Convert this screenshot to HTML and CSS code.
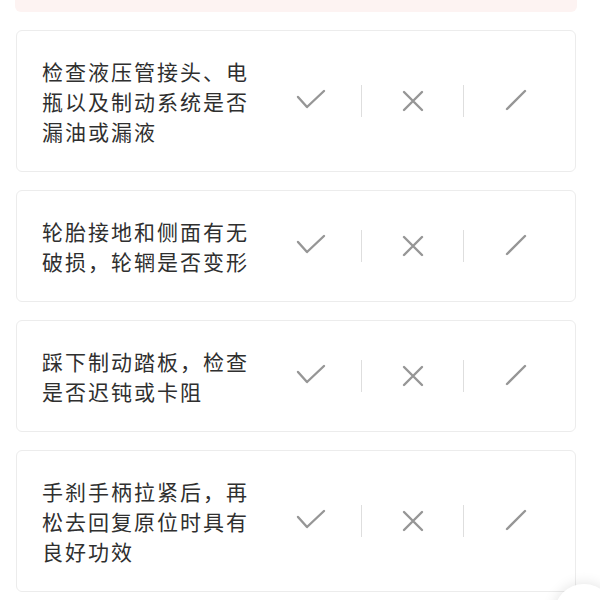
FILE: index.html
```html
<!DOCTYPE html>
<html lang="zh-CN">
<head>
    <meta charset="UTF-8">
    <meta name="viewport" content="width=device-width, initial-scale=1.0">
    <title>检查项目</title>
    <link rel="stylesheet" href="styles.css">
</head>
<body>

    <!-- Notice bar (scrolled mostly out of view) -->
    <div class="notice"></div>

    <!-- Check items -->
    <div class="list">
        <div class="item">
            <p class="item-text">检查液压管接头、电瓶以及制动系统是否漏油或漏液</p>
            <div class="choices">
                <span class="choice"><svg width="30" height="24" viewBox="0 0 30 24"><path d="M2 8 L11 18 L28 2" /></svg></span>
                <span class="choice"><svg width="30" height="24" viewBox="0 0 30 24"><path d="M6 3 L24 21 M24 3 L6 21" /></svg></span>
                <span class="choice"><svg width="30" height="24" viewBox="0 0 30 24"><path d="M7 20 L25 2" /></svg></span>
            </div>
        </div>

        <div class="item">
            <p class="item-text">轮胎接地和侧面有无破损，轮辋是否变形</p>
            <div class="choices">
                <span class="choice"><svg width="30" height="24" viewBox="0 0 30 24"><path d="M2 8 L11 18 L28 2" /></svg></span>
                <span class="choice"><svg width="30" height="24" viewBox="0 0 30 24"><path d="M6 3 L24 21 M24 3 L6 21" /></svg></span>
                <span class="choice"><svg width="30" height="24" viewBox="0 0 30 24"><path d="M7 20 L25 2" /></svg></span>
            </div>
        </div>

        <div class="item">
            <p class="item-text">踩下制动踏板，检查是否迟钝或卡阻</p>
            <div class="choices">
                <span class="choice"><svg width="30" height="24" viewBox="0 0 30 24"><path d="M2 8 L11 18 L28 2" /></svg></span>
                <span class="choice"><svg width="30" height="24" viewBox="0 0 30 24"><path d="M6 3 L24 21 M24 3 L6 21" /></svg></span>
                <span class="choice"><svg width="30" height="24" viewBox="0 0 30 24"><path d="M7 20 L25 2" /></svg></span>
            </div>
        </div>

        <div class="item">
            <p class="item-text">手刹手柄拉紧后，再松去回复原位时具有良好功效</p>
            <div class="choices">
                <span class="choice"><svg width="30" height="24" viewBox="0 0 30 24"><path d="M2 8 L11 18 L28 2" /></svg></span>
                <span class="choice"><svg width="30" height="24" viewBox="0 0 30 24"><path d="M6 3 L24 21 M24 3 L6 21" /></svg></span>
                <span class="choice"><svg width="30" height="24" viewBox="0 0 30 24"><path d="M7 20 L25 2" /></svg></span>
            </div>
        </div>
    </div>

    <!-- Floating button, just peeking in at the corner -->
    <div class="fab"></div>

</body>
</html>
```

FILE: styles.css
```css
* {
    margin: 0;
    padding: 0;
    box-sizing: border-box;
}
body {
    font-family: "Noto Sans CJK SC", "Noto Sans", sans-serif;
    background: #fff;
    color: #333;
    overflow: hidden;
}
/* Top notice */
.notice {
    width: 562px;
    height: 12px;
    margin-left: 15px;
    background: #fdf3f2;
    border-radius: 0 0 6px 6px;
}
/* Item list */
.list {
    display: flex;
    flex-direction: column;
    gap: 18px;
    width: 560px;
    margin: 18px 0 0 16px;
}
.item {
    display: flex;
    align-items: center;
    padding: 25px 10px 25px 25px;
    border: 1px solid #ececec;
    border-radius: 6px;
    background: #fff;
}
.item-text {
    width: 218px;
    padding-right: 8px;
    font-size: 21px;
    line-height: 30px;
    letter-spacing: 2px;
    color: #2f2f2f;
}
.choices {
    flex: 1;
    display: flex;
    align-items: center;
}
.choice {
    flex: 1;
    height: 32px;
    display: flex;
    align-items: center;
    justify-content: center;
    border-left: 1px solid #dedede;
}
.choice:first-child {
    border-left: none;
}
.choice svg {
    fill: none;
    stroke: #969696;
    stroke-width: 2.4;
    stroke-linecap: round;
    stroke-linejoin: round;
}
/* Floating button */
.fab {
    position: fixed;
    right: -14px;
    bottom: -44px;
    width: 60px;
    height: 60px;
    border-radius: 50%;
    background: #fff;
    box-shadow: 0 0 14px rgba(0, 0, 0, 0.12);
}
```
